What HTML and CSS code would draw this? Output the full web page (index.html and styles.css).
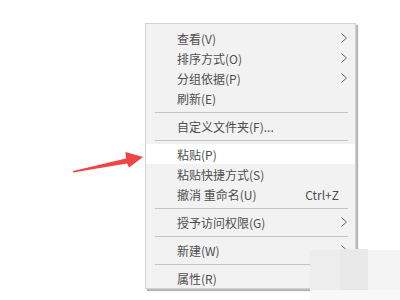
FILE: index.html
```html
<!DOCTYPE html>
<html lang="zh-CN">
<head>
<meta charset="utf-8">
<link rel="stylesheet" href="styles.css">
</head>
<body>
<div class="menu">
  <div class="item"><span class="label">查看(V)</span><svg class="chev" viewBox="0 0 6 10"><path d="M0.5 0.5 L5.5 5 L0.5 9.5"/></svg></div>
  <div class="item"><span class="label">排序方式(O)</span><svg class="chev" viewBox="0 0 6 10"><path d="M0.5 0.5 L5.5 5 L0.5 9.5"/></svg></div>
  <div class="item"><span class="label">分组依据(P)</span><svg class="chev" viewBox="0 0 6 10"><path d="M0.5 0.5 L5.5 5 L0.5 9.5"/></svg></div>
  <div class="item"><span class="label">刷新(E)</span></div>
  <div class="sep"></div>
  <div class="item"><span class="label">自定义文件夹(F)...</span></div>
  <div class="sep"></div>
  <div class="item hover"><span class="label">粘贴(P)</span></div>
  <div class="item"><span class="label">粘贴快捷方式(S)</span></div>
  <div class="item"><span class="label">撤消 重命名(U)</span><span class="key">Ctrl+Z</span></div>
  <div class="sep"></div>
  <div class="item"><span class="label">授予访问权限(G)</span><svg class="chev" viewBox="0 0 6 10"><path d="M0.5 0.5 L5.5 5 L0.5 9.5"/></svg></div>
  <div class="sep"></div>
  <div class="item"><span class="label">新建(W)</span><svg class="chev" viewBox="0 0 6 10"><path d="M0.5 0.5 L5.5 5 L0.5 9.5"/></svg></div>
  <div class="sep"></div>
  <div class="item"><span class="label">属性(R)</span></div>
</div>

<svg class="pointer" width="400" height="300" viewBox="0 0 400 300">
  <polygon points="73,171 126,158.5 125.5,152 143,157 129,167.5 127,163.5 73,172.5" fill="#f04545"/>
</svg>

<div class="blur b1"></div>
<div class="blur b2"></div>
<div class="blur b3"></div>
<div class="blur b4"></div>
</body>
</html>
```

FILE: styles.css
```css
html, body {
  margin: 0;
  padding: 0;
  background: #ffffff;
}
body {
  width: 400px;
  height: 300px;
  overflow: hidden;
  position: relative;
  font-family: "Noto Sans CJK SC", "Noto Sans", sans-serif;
}
.menu {
  box-sizing: border-box;
  margin: 23px 0 0 145px;
  width: 211px;
  height: 266px;
  padding: 4px 0 0 0;
  background: #f2f2f2;
  border: 1px solid #d2d2d2;
  box-shadow: 2px 2px 1px rgba(0, 0, 0, 0.28);
}
.item {
  display: flex;
  align-items: center;
  height: 20px;
  padding: 0 8px 0 31px;
  font-size: 12px;
  color: #4e4e4e;
}
.item.hover {
  background: #ffffff;
}
.label {
  flex: 1;
  white-space: nowrap;
}
.key {
  margin-right: 8px;
  font-size: 12px;
  color: #4e4e4e;
}
.chev {
  width: 6px;
  height: 10px;
  fill: none;
  stroke: #6a6a6a;
  stroke-width: 1;
}
.sep {
  height: 8px;
  display: flex;
  align-items: center;
  padding: 0 7px 0 9px;
}
.sep::before {
  content: "";
  flex: 1;
  height: 1px;
  background: #c4c4c4;
}
.pointer {
  position: absolute;
  left: 0;
  top: 0;
  pointer-events: none;
}
.blur {
  position: absolute;
}
.b1 { left: 310px; top: 250px; width: 30px; height: 40px; background: #ededed; }
.b2 { left: 340px; top: 249px; width: 28px; height: 41px; background: #e9e9e9; }
.b3 { left: 368px; top: 250px; width: 32px; height: 40px; background: #f4f4f4; }
.b4 { left: 310px; top: 290px; width: 90px; height: 10px; background: #f8f8f8; }
```
